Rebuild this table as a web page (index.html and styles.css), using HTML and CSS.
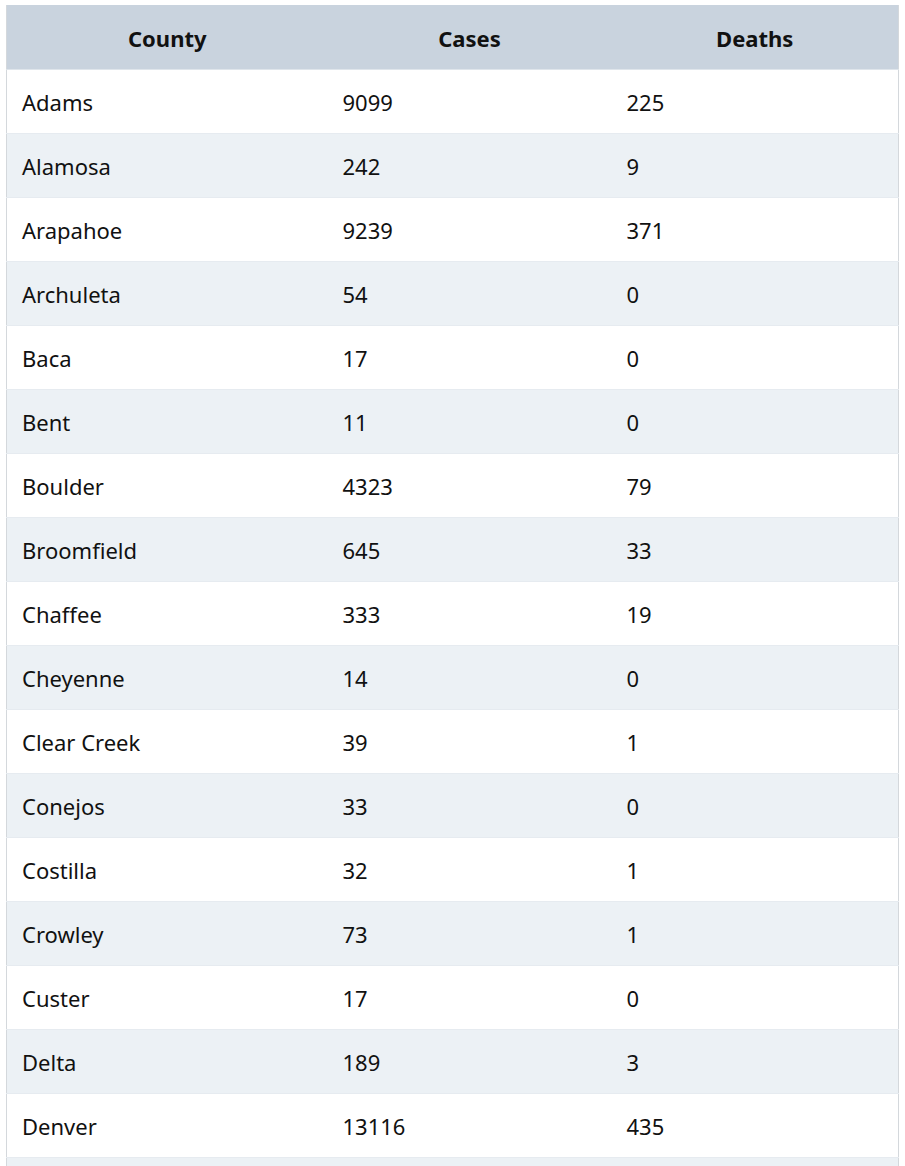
FILE: index.html
```html
<!DOCTYPE html>
<html>
<head>
<meta charset="utf-8">
<link rel="stylesheet" href="styles.css">
</head>
<body>
<table class="cases">
  <colgroup><col class="c1"><col class="c2"><col class="c3"></colgroup>
  <thead>
    <tr><th>County</th><th>Cases</th><th>Deaths</th></tr>
  </thead>
  <tbody>
    <tr><td>Adams</td><td>9099</td><td>225</td></tr>
    <tr><td>Alamosa</td><td>242</td><td>9</td></tr>
    <tr><td>Arapahoe</td><td>9239</td><td>371</td></tr>
    <tr><td>Archuleta</td><td>54</td><td>0</td></tr>
    <tr><td>Baca</td><td>17</td><td>0</td></tr>
    <tr><td>Bent</td><td>11</td><td>0</td></tr>
    <tr><td>Boulder</td><td>4323</td><td>79</td></tr>
    <tr><td>Broomfield</td><td>645</td><td>33</td></tr>
    <tr><td>Chaffee</td><td>333</td><td>19</td></tr>
    <tr><td>Cheyenne</td><td>14</td><td>0</td></tr>
    <tr><td>Clear Creek</td><td>39</td><td>1</td></tr>
    <tr><td>Conejos</td><td>33</td><td>0</td></tr>
    <tr><td>Costilla</td><td>32</td><td>1</td></tr>
    <tr><td>Crowley</td><td>73</td><td>1</td></tr>
    <tr><td>Custer</td><td>17</td><td>0</td></tr>
    <tr><td>Delta</td><td>189</td><td>3</td></tr>
    <tr><td>Denver</td><td>13116</td><td>435</td></tr>
    <tr class="partial"><td></td><td></td><td></td></tr>
  </tbody>
</table>
</body>
</html>
```
FILE: styles.css
```css
html, body {
  margin: 0;
  padding: 0;
  background: #ffffff;
  overflow: hidden;
}
body {
  padding: 5px 7px 0 6px;
  font-family: "Noto Sans", "Open Sans", sans-serif;
  color: #111111;
}
.cases {
  width: 892px;
  border-collapse: collapse;
  table-layout: fixed;
  border-left: 1px solid #d4d8dc;
  border-right: 1px solid #d4d8dc;
}
.c1 { width: 321px; }
.c2 { width: 284px; }
.c3 { width: 287px; }
.cases th {
  height: 63px;
  padding: 1px 0 0 0;
  background: #c9d3de;
  font-size: 22px;
  line-height: 30px;
  font-weight: 700;
  text-align: center;
  vertical-align: middle;
  border-bottom: 1px solid #dfe5eb;
}
.cases td {
  height: 62px;
  padding: 1px 0 0 15px;
  font-size: 22px;
  line-height: 30px;
  vertical-align: middle;
  border-top: 1px solid #e6ebf0;
}
.cases tbody tr:nth-child(even) td {
  background: #ecf1f5;
}
```
